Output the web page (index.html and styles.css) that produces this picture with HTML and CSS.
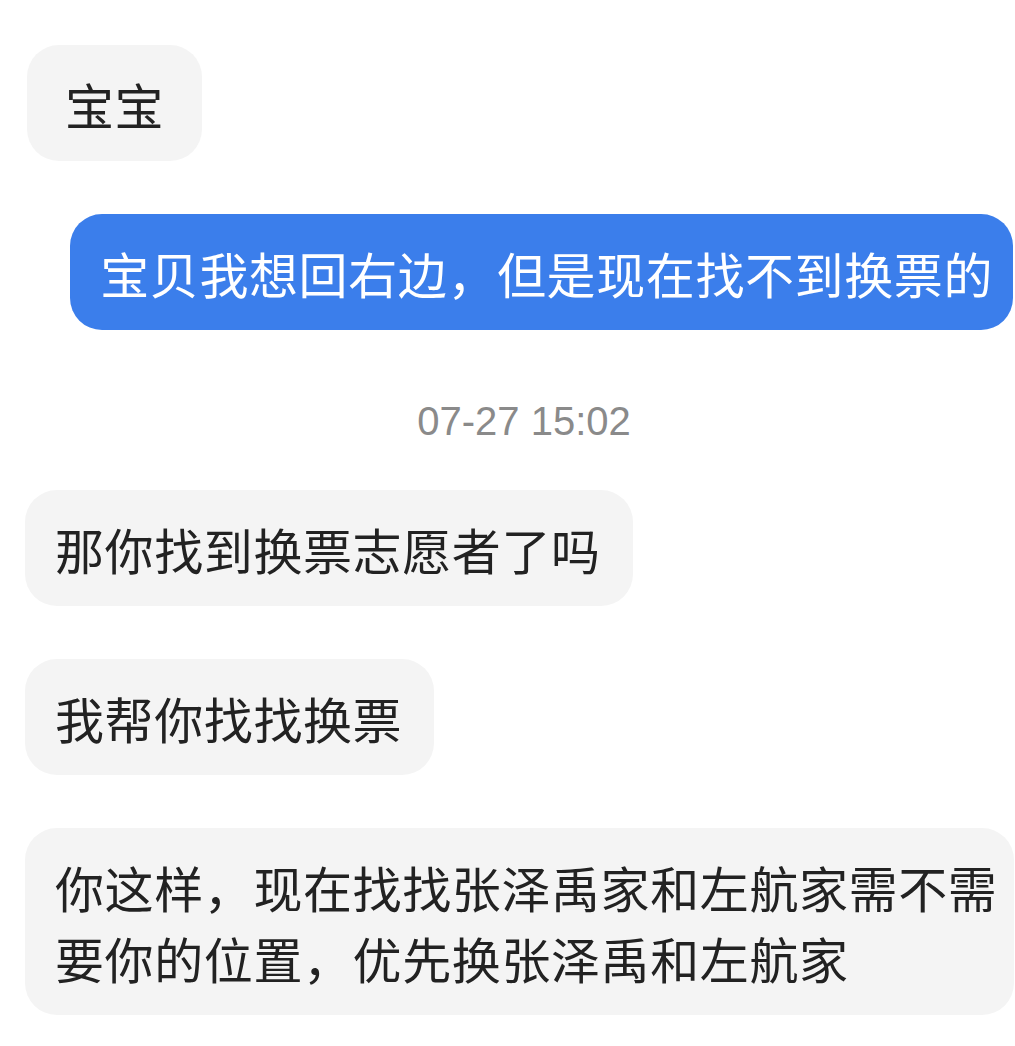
FILE: index.html
```html
<!DOCTYPE html>
<html lang="zh-CN">
  <head>
    <meta charset="UTF-8" />
    <meta name="viewport" content="width=device-width, initial-scale=1.0" />
    <title>聊天</title>
    <link rel="stylesheet" href="styles.css">
  </head>
  <body>
    <div class="chat">
      <div class="bubble bubble-short">宝宝</div>
      <div class="bubble bubble-me">宝贝我想回右边，但是现在找不到换票的</div>
      <div class="time">07-27 15:02</div>
      <div class="bubble">那你找到换票志愿者了吗</div>
      <div class="bubble">我帮你找找换票</div>
      <div class="bubble bubble-wide">你这样，现在找找张泽禹家和左航家需不需<br />要你的位置，优先换张泽禹和左航家</div>
    </div>
  </body>
</html>
```

FILE: styles.css
```css
body {
  margin: 0;
  background: #fff;
  font-family: "Noto Sans CJK SC", "Noto Sans", sans-serif;
}

.chat {
  display: flex;
  flex-direction: column;
  gap: 53px;
  padding: 45px 2px 40px 25px;
}

.bubble {
  align-self: flex-start;
  background: #f4f4f4;
  color: #222;
  font-size: 49px;
  letter-spacing: 0.6px;
  line-height: 71px;
  padding: 22.5px 32px 22.5px 30px;
  border-radius: 32px;
  white-space: nowrap;
}

.bubble-short {
  margin-left: 2px;
  padding-left: 38px;
  padding-right: 38px;
}

.bubble-me {
  align-self: flex-end;
  background: #3b7eeb;
  color: #fff;
  padding-right: 20px;
}

.bubble-wide {
  padding-right: 17px;
}

.time {
  align-self: center;
  margin-top: 16px;
  font-family: "Liberation Sans", Arial, sans-serif;
  font-size: 40px;
  line-height: 38px;
  padding-top: 3px;
  margin-bottom: -3px;
  color: #8a8a8a;
  padding-left: 10px;
}
```
